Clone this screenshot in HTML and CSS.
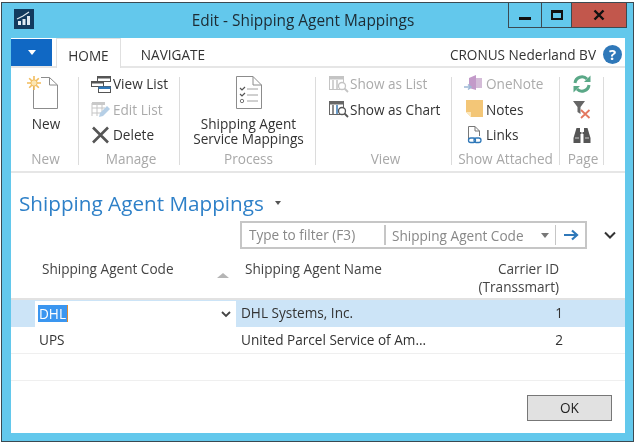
FILE: index.html
```html
<!DOCTYPE html>
<html lang="en">
<head>
<meta charset="utf-8">
<title>Edit - Shipping Agent Mappings</title>
<link rel="stylesheet" href="styles.css">
</head>
<body>
<div class="window">
  <div class="titlebar">
    <svg class="app-icon" width="20" height="20" viewBox="0 0 20 20"><rect width="20" height="20" fill="#123a5e"/><path d="M4 16v-4h3v4zM8.500 16v-6h3v6zM13 16V7h3v9z" fill="#dfe9f1"/><path d="M3 10 L9 7 L15 3" stroke="#dfe9f1" stroke-width="1.200" fill="none"/></svg>
    <div class="title">Edit - Shipping Agent Mappings</div>
    <div class="controls">
      <div class="ctl ctl-min"><span class="min-bar"></span></div>
      <div class="ctl ctl-max"><span class="max-box"></span></div>
      <div class="ctl ctl-close"><svg width="12" height="12" viewBox="0 0 12 12"><path d="M1.500 1.500 10.500 10.500M10.500 1.500 1.500 10.500" stroke="#111" stroke-width="2.400"/></svg></div>
    </div>
  </div>
  <div class="content">
    <div class="tabs">
      <div class="app-btn"><span class="app-tri"></span></div>
      <div class="tab tab-active">HOME</div>
      <div class="tab">NAVIGATE</div>
      <div class="company">CRONUS Nederland BV</div>
      <div class="help">?</div>
    </div>
    <div class="ribbon">
      <div class="group g-new">
        <div class="group-body big">
          <svg width="31" height="33" viewBox="0 0 31 33"><path d="M6.500 8V32.500H30.500V9L22.500 1.500H14" fill="#fff" stroke="#8c8c8c"/><path d="M22.500 1.500V9H30.500" fill="none" stroke="#8c8c8c"/><g stroke="#f2bc5c" stroke-width="1.600"><path d="M7 0v14M0 7h14M2.200 2.200 11.800 11.800M11.800 2.200 2.200 11.800"/></g><circle cx="7" cy="7" r="3.200" fill="#fbe6b5" stroke="#f2bc5c"/></svg>
          <div class="big-label">New</div>
        </div>
        <div class="group-label">New</div>
      </div>
      <div class="group g-manage">
        <div class="group-body items">
          <div class="item"><svg class="ico" width="20" height="18" viewBox="0 0 20 18"><rect x="6.500" y="1.500" width="13" height="5" fill="#fff" stroke="#555"/><rect x="6.500" y="1.500" width="13" height="2" fill="#555"/><rect x=".5" y="6.500" width="12" height="5" fill="#fff" stroke="#555"/><rect x=".5" y="6.500" width="12" height="2" fill="#555"/><rect x="7.500" y="11.500" width="12" height="6" fill="#fff" stroke="#555"/><rect x="7.500" y="11.500" width="12" height="2.500" fill="#2f78b9"/></svg>View List</div>
          <div class="item off"><svg class="ico" width="20" height="18" viewBox="0 0 20 18"><path d="M1 3h13M1 8h13M1 13h10M1 3v13M6 3v13M11 3v10" stroke="#c5c5c5" fill="none"/><rect x="1" y="2" width="13" height="3" fill="#c9c9c9"/><path d="M8 17l1-4 7-7 3 3-7 7z" fill="#b6cfe6"/></svg>Edit List</div>
          <div class="item"><svg class="ico" width="20" height="18" viewBox="0 0 20 18"><path d="M2 1.500 17 16.500M17 1.500 2 16.500" stroke="#555" stroke-width="2.600"/></svg>Delete</div>
        </div>
        <div class="group-label">Manage</div>
      </div>
      <div class="group g-process">
        <div class="group-body big">
          <svg width="26" height="33" viewBox="0 0 26 33"><path d="M.5 .5H17L25.500 9V32.500H.5Z" fill="#fff" stroke="#8c8c8c"/><path d="M17 .5V9H25.500" fill="none" stroke="#8c8c8c"/><path d="M4 12l2 2 3-3M4 18l2 2 3-3" stroke="#555" fill="none" stroke-width="1.200"/><path d="M11 13h11M11 19h11M11 25h11" stroke="#a0a0a0"/><circle cx="6" cy="25" r="1.700" fill="none" stroke="#777"/></svg>
          <div class="big-label two">Shipping Agent<br>Service Mappings</div>
        </div>
        <div class="group-label">Process</div>
      </div>
      <div class="group g-view">
        <div class="group-body items">
          <div class="item off"><svg class="ico" width="20" height="18" viewBox="0 0 20 18"><rect x=".5" y="1.500" width="14" height="13" fill="#fff" stroke="#c4c4c4"/><rect x=".5" y="1.500" width="14" height="3" fill="#c4c4c4"/><path d="M4 5v9M8 5v9" stroke="#c4c4c4" stroke-width="1.500"/><circle cx="13" cy="11" r="3.500" fill="#fff" stroke="#c4c4c4" stroke-width="1.300"/><path d="M15.500 13.500 19 17" stroke="#c4c4c4" stroke-width="1.800"/></svg>Show as List</div>
          <div class="item"><svg class="ico" width="20" height="18" viewBox="0 0 20 18"><rect x=".5" y="1.500" width="14" height="13" fill="#fff" stroke="#666"/><rect x=".5" y="1.500" width="14" height="3" fill="#666"/><path d="M4 5v9" stroke="#666" stroke-width="1.500"/><path d="M8 5v9" stroke="#3a7ab5" stroke-width="1.500"/><circle cx="13" cy="11" r="3.500" fill="#fff" stroke="#555" stroke-width="1.300"/><path d="M15.500 13.500 19 17" stroke="#555" stroke-width="1.800"/></svg>Show as Chart</div>
        </div>
        <div class="group-label">View</div>
      </div>
      <div class="group g-attached">
        <div class="group-body items">
          <div class="item off"><svg class="ico" width="20" height="18" viewBox="0 0 20 18"><path d="M5 3 12 0V15L5 13Z" fill="#c39ac9"/><rect x="12" y="3" width="6" height="10" fill="#d4bcd8"/><path d="M0 12h6M4 9.500 7 12 4 14.500" stroke="#9db8d6" stroke-width="1.500" fill="none"/></svg>OneNote</div>
          <div class="item"><svg class="ico" width="20" height="18" viewBox="0 0 20 18"><path d="M2 0H19V17H7L2 12Z" fill="#f3c677"/><path d="M2 12H7V17Z" fill="#fbe7bd"/></svg>Notes</div>
          <div class="item"><svg class="ico" width="20" height="18" viewBox="0 0 20 18"><path d="M4.500 15.500V.5H11L15.500 5V10" fill="#fff" stroke="#777"/><path d="M11 .5V5H15.500" fill="none" stroke="#777"/><rect x="4.500" y="12" width="7" height="4.500" rx="2.200" fill="none" stroke="#2f78b9" stroke-width="1.300"/><rect x="10" y="12" width="7" height="4.500" rx="2.200" fill="none" stroke="#2f78b9" stroke-width="1.300"/></svg>Links</div>
        </div>
        <div class="group-label">Show Attached</div>
      </div>
      <div class="group g-page">
        <div class="group-body page-icons">
          <svg width="18" height="18" viewBox="0 0 18 18"><path d="M2 8A7 7 0 0 1 14 4" fill="none" stroke="#5aa887" stroke-width="3"/><path d="M11 7h6.500V0.500Z" fill="#5aa887"/><path d="M16 10A7 7 0 0 1 4 14" fill="none" stroke="#5aa887" stroke-width="3"/><path d="M7 11H.5V17.500Z" fill="#5aa887"/></svg>
          <svg width="18" height="18" viewBox="0 0 18 18"><path d="M0 0H12L7.500 6V13L4.500 11V6Z" fill="#666"/><path d="M8 9 16.500 17M16.500 9 8 17" stroke="#e3785f" stroke-width="1.800"/></svg>
          <svg width="18" height="16" viewBox="0 0 18 16"><path d="M3.500 1h3.500v4h4V1h3.500l3 10v5h-7V7H7.500v9H.5V11Z" fill="#555"/><path d="M9 5v4" stroke="#fff" stroke-width="1"/><path d="M2 11h4M12 11h4" stroke="#ccc"/></svg>
        </div>
        <div class="group-label">Page</div>
      </div>
    </div>
    <div class="page-head">
      <h1 class="page-title">Shipping Agent Mappings</h1>
      <span class="title-tri"></span>
    </div>
    <div class="filter-row">
      <div class="filter">
        <div class="filter-input">Type to filter (F3)</div>
        <div class="filter-field">Shipping Agent Code</div>
        <span class="filter-tri"></span>
        <div class="filter-go"><svg width="15" height="12" viewBox="0 0 15 12"><path d="M0 6H12M8 1.500 13 6 8 10.500" fill="none" stroke="#2f78b9" stroke-width="2.200"/></svg></div>
      </div>
      <svg class="filter-more" width="12" height="8" viewBox="0 0 12 8"><path d="M1 1.500 6 6.500 11 1.500" fill="none" stroke="#333" stroke-width="2"/></svg>
    </div>
    <div class="table">
      <div class="row head">
        <div class="cell-gutter"></div>
        <div class="cell-code">Shipping Agent Code<span class="sort-tri"></span></div>
        <div class="cell-name">Shipping Agent Name</div>
        <div class="cell-num">Carrier ID<br>(Transsmart)</div>
      </div>
      <div class="row data selected">
        <div class="cell-gutter"></div>
        <div class="cell-code edit"><span class="sel">DHL</span><svg width="10" height="7" viewBox="0 0 10 7"><path d="M1 1 5 5 9 1" fill="none" stroke="#444" stroke-width="1.800"/></svg></div>
        <div class="cell-name">DHL Systems, Inc.</div>
        <div class="cell-num">1</div>
      </div>
      <div class="row data">
        <div class="cell-gutter"></div>
        <div class="cell-code plain">UPS</div>
        <div class="cell-name">United Parcel Service of Am...</div>
        <div class="cell-num">2</div>
      </div>
      <div class="row data empty"></div>
    </div>
    <div class="footer"><div class="ok">OK</div></div>
  </div>
</div>
</body>
</html>
```

FILE: styles.css
```css
* { box-sizing: border-box; }
html, body { margin: 0; padding: 0; background: #fff; }
body { width: 634px; height: 444px; overflow: hidden; font-family: "Open Sans", "Noto Sans", sans-serif; font-size: 13.6px; color: #333; }
.window { width: 633px; height: 440px; margin: 2px 0 0 1px; border: 1px solid #3b4a52; background: #63c8ec; padding: 0 8px 8px 9px; display: flex; flex-direction: column; filter: blur(0.35px); }
.titlebar { height: 35px; display: flex; align-items: center; position: relative; flex: none; margin: 0 -8px 0 -9px; padding-left: 12px; }
.app-icon { margin-top: -3px; }
.title { position: absolute; left: 0; right: 0; top: 6px; text-align: center; font-size: 15.4px; line-height: 24px; color: #1d2b33; padding-right: 29px; }
.controls { position: absolute; right: 6px; top: 0; display: flex; height: 25px; border: 1px solid #3b4a52; border-top: 0; }
.ctl { height: 100%; display: flex; align-items: center; justify-content: center; }
.ctl-min { width: 33px; border-right: 1px solid #3b4a52; }
.ctl-max { width: 30px; border-right: 1px solid #3b4a52; }
.ctl-close { width: 54px; background: #c2574c; }
.min-bar { width: 12px; height: 3px; background: #111; margin-top: 7px; }
.max-box { width: 12px; height: 10px; border: 2px solid #111; border-top-width: 3px; }
.content { flex: 1; background: #fff; display: flex; flex-direction: column; min-height: 0; }
.tabs { height: 30px; flex: none; display: flex; align-items: stretch; border-bottom: 2px solid #e6e6e6; position: relative; }
.app-btn { width: 41px; height: 27px; background: #1068c4; display: flex; align-items: center; justify-content: center; margin-top: 1px; }
.app-tri { width: 0; height: 0; border: 4px solid transparent; border-top: 5px solid #fff; border-bottom: 0; }
.tab { padding: 5px 0 0; line-height: 24px; color: #333; text-align: center; }
.tab + .tab { width: 102px; margin-left: 1px; }
.tab-active { border: 1px solid #e0e0e0; border-bottom: 0; height: 30px; background: #fff; width: 65px; margin-left: 4px; position: relative; }
.company { margin-left: auto; padding-top: 5px; line-height: 24px; color: #333; margin-right: 7px; }
.help { width: 19px; height: 19px; border-radius: 50%; background: #2f78b9; color: #fff; font-weight: 700; font-size: 15px; line-height: 19px; text-align: center; margin: 7px 3px 0 0; }
.ribbon { height: 105px; flex: none; display: flex; border-bottom: 2px solid #e6e6e6; padding: 9px 0 8px; }
.group { display: flex; flex-direction: column; border-right: 1px solid #dcdcdc; height: 88px; flex: none; }
.g-new { width: 68px; }
.g-manage { width: 101px; }
.g-process { width: 136px; padding-left: 2px; }
.g-view { width: 136px; }
.g-attached { width: 108px; }
.g-page { width: 44px; }
.group-body { flex: 1; min-height: 0; }
.group-label { text-align: center; color: #a8a8a8; line-height: 18px; height: 18px; margin-bottom: -3px; white-space: nowrap; }
.g-new .group-label { padding-left: 2px; }
.g-manage .group-label { padding-left: 4px; }
.g-view .group-label { padding-left: 4px; }
.g-page .group-label { padding-left: 3px; }
.big { display: flex; flex-direction: column; align-items: center; }
.g-new .big svg { margin: -1px 0 0 -4px; flex: none; }
.g-process .big svg { margin-top: -1px; flex: none; }
.big-label { line-height: 16px; color: #333; margin-top: 7px; text-align: center; padding-left: 3px; white-space: nowrap; }
.g-process .big-label { margin-top: 7px; padding-left: 0; }
.two { line-height: 15px; }
.items { display: flex; flex-direction: column; padding-left: 12px; margin-top: -6px; }
.g-view .items { padding-left: 13px; }
.g-view .item { gap: 1px; }
.item { display: flex; align-items: center; height: 25.500px; flex: none; white-space: nowrap; gap: 2px; color: #333; }
.off { color: #ababab; }
.page-icons { display: flex; flex-direction: column; align-items: center; gap: 8px; margin-top: -2px; }
.page-icons svg { flex: none; }
.page-head { display: flex; align-items: center; padding: 16px 0 0 8px; height: 46px; flex: none; }
.page-title { margin: -2px 0 0; font-weight: 400; font-size: 20.7px; line-height: 28px; color: #2e80c8; }
.title-tri { width: 0; height: 0; border: 3px solid transparent; border-top: 4px solid #555; border-bottom: 0; margin: -3px 0 0 11px; }
.filter-row { display: flex; align-items: center; padding-left: 229px; height: 28px; margin-top: 2px; flex: none; }
.filter { width: 347px; height: 28px; border: 2px solid #c6c6c6; display: flex; align-items: center; color: #888; position: relative; flex: none; }
.filter-input { width: 144px; padding-left: 7px; height: 20px; line-height: 20px; border-right: 2px solid #c6c6c6; margin-right: 6px; white-space: nowrap; }
.filter-field { width: 149px; white-space: nowrap; }
.filter-tri { width: 0; height: 0; border: 4.500px solid transparent; border-top: 5px solid #777; border-bottom: 0; }
.filter-go { margin-left: 6px; padding-left: 8px; border-left: 1px solid #c6c6c6; height: 20px; display: flex; align-items: center; }
.filter-more { margin-left: 17px; flex: none; }
.table { display: flex; flex-direction: column; flex: none; }
.row { display: grid; grid-template-columns: 24px 201px 1fr auto; }
.head { height: 51px; border-bottom: 2px solid #e2e2e2; line-height: 18px; padding-top: 11px; color: #444; }
.head .cell-code { padding-left: 7px; position: relative; }
.head .cell-name { padding-left: 9px; }
.head .cell-num { text-align: right; white-space: nowrap; margin-right: 66px; }
.sort-tri { position: absolute; left: 182px; top: 13px; width: 0; height: 0; border: 6px solid transparent; border-bottom: 5px solid #b5b5b5; border-top: 0; }
.data { height: 27px; border-bottom: 1px solid #efefef; align-items: center; line-height: 26px; color: #333; }
.selected { background: #cce4f7; border-bottom: 0; }
.selected .cell-name, .selected .cell-num { margin-bottom: 2px; }
.edit { background: #fff; height: 27px; display: flex; align-items: center; justify-content: space-between; padding: 0 5px 0 3px; }
.sel { background: #3a96f0; color: #fff; line-height: 17px; padding: 0 1px; border-right: 1px solid #d98a3a; margin-bottom: 2px; }
.plain { padding-left: 4px; }
.data .cell-name { padding-left: 5px; }
.data .cell-num { padding-right: 62px; }
.empty { display: block; }
.footer { display: flex; justify-content: flex-end; padding: 14px 13px 0 0; }
.ok { width: 85px; height: 26px; border: 1px solid #777; background: #e1e1e1; text-align: center; line-height: 24px; color: #222; }
```
